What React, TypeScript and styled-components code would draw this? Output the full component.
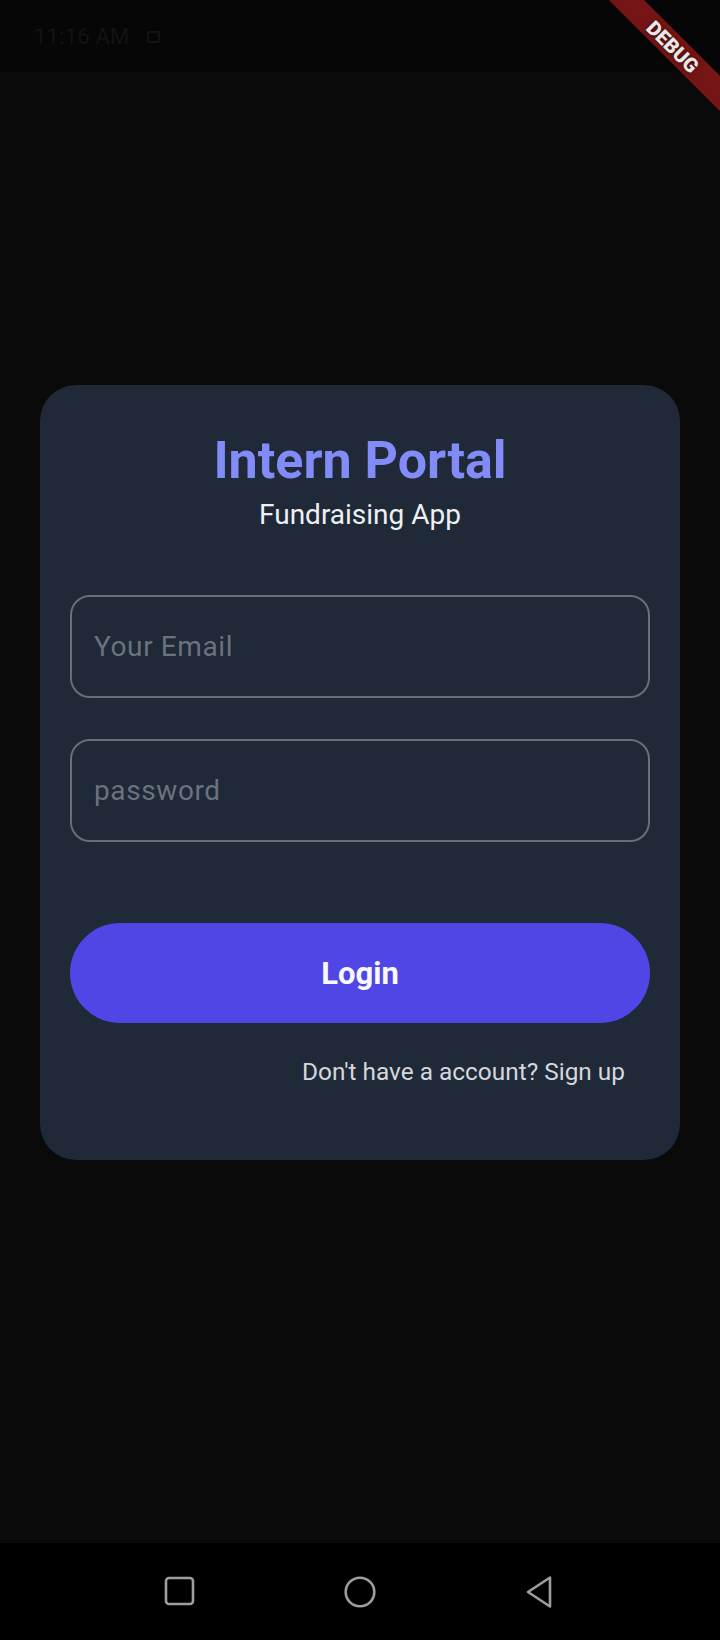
import React from "react";
import styled, { createGlobalStyle } from "styled-components";

const GlobalStyle = createGlobalStyle`
  html, body {
    margin: 0;
    padding: 0;
    background: #0a0a0a;
    overflow: hidden;
  }
  * { box-sizing: border-box; }
  body {
    font-family: Roboto, "Noto Sans", "Liberation Sans", sans-serif;
  }
`;

const Screen = styled.div`
  position: relative;
  width: 720px;
  height: 1640px;
  display: flex;
  flex-direction: column;
  background: #0a0a0a;
  overflow: hidden;
`;

const StatusBar = styled.div`
  height: 72px;
  flex: none;
  background: #060606;
  display: flex;
  align-items: center;
  padding-left: 34px;
  gap: 18px;
`;

const Clock = styled.span`
  font-size: 22px;
  font-weight: 400;
  color: #131313;
  letter-spacing: 0.2px;
  margin-top: 1px;
`;

const SimIcon = styled.span`
  width: 13px;
  height: 12px;
  border: 2px solid #131313;
  border-radius: 2px;
  margin-top: 2px;
`;

const Main = styled.main`
  flex: 1;
  display: flex;
  flex-direction: column;
  align-items: center;
`;

const Card = styled.section`
  margin-top: 313px;
  width: 640px;
  height: 775px;
  background: #1f2937;
  border-radius: 36px;
  padding: 45px 30px 0;
  display: flex;
  flex-direction: column;
  align-items: stretch;
`;

const Title = styled.h1`
  margin: 0;
  text-align: center;
  font-size: 52px;
  line-height: 62px;
  font-weight: 700;
  color: #818cf8;
`;

const Subtitle = styled.p`
  margin: 6px 0 0;
  text-align: center;
  font-size: 28px;
  line-height: 34px;
  font-weight: 400;
  color: #eef0f3;
`;

const Fields = styled.div`
  margin-top: 63px;
  display: flex;
  flex-direction: column;
  gap: 41px;
`;

const Field = styled.input`
  width: 100%;
  height: 103px;
  border: 2px solid #6a6e79;
  border-radius: 20px;
  background: transparent;
  padding: 0 22px;
  font-family: Roboto, "Noto Sans", sans-serif;
  font-size: 28px;
  letter-spacing: 0.6px;
  color: #e5e7eb;
  outline: none;
  &::placeholder {
    color: #6b7280;
  }
`;

const LoginButton = styled.button`
  margin-top: 81px;
  width: 100%;
  height: 100px;
  border: none;
  border-radius: 50px;
  background: #4f46e5;
  color: #f8f8ff;
  font-family: Roboto, "Noto Sans", sans-serif;
  font-size: 31px;
  font-weight: 700;
  cursor: pointer;
`;

const SignupRow = styled.div`
  margin-top: 35px;
  display: flex;
  justify-content: flex-end;
  padding-right: 25px;
`;

const SignupLink = styled.span`
  font-size: 24.4px;
  line-height: 28px;
  color: #d4d7dd;
`;

const NavBar = styled.nav`
  height: 97px;
  flex: none;
  background: #000;
  display: flex;
  align-items: center;
  justify-content: center;
`;

const NavSlot = styled.div`
  width: 180px;
  display: flex;
  justify-content: center;
  align-items: center;
`;

const Banner = styled.div`
  position: absolute;
  left: 573px;
  top: 34px;
  width: 200px;
  height: 25px;
  background: #761515;
  transform: rotate(45deg);
  display: flex;
  align-items: center;
  justify-content: center;
`;

const BannerText = styled.span`
  font-family: Roboto, "Noto Sans", sans-serif;
  font-size: 20px;
  line-height: 20px;
  font-weight: 900;
  color: #e8e8e8;
  text-shadow: 0 0 5px rgba(0, 0, 0, 0.5);
`;

export default function App() {
  return (
    <>
      <GlobalStyle />
      <Screen>
        <StatusBar>
          <Clock>11:16 AM</Clock>
          <SimIcon />
        </StatusBar>
        <Main>
          <Card>
            <Title>Intern Portal</Title>
            <Subtitle>Fundraising App</Subtitle>
            <Fields>
              <Field type="email" placeholder="Your Email" />
              <Field type="password" placeholder="password" />
            </Fields>
            <LoginButton>Login</LoginButton>
            <SignupRow>
              <SignupLink>Don't have a account? Sign up</SignupLink>
            </SignupRow>
          </Card>
        </Main>
        <NavBar>
          <NavSlot>
            <svg width="32" height="32" viewBox="0 0 32 32">
              <rect x="2" y="2" width="27" height="26" rx="3" fill="none" stroke="#9e9e9e" strokeWidth="2.6" />
            </svg>
          </NavSlot>
          <NavSlot>
            <svg width="34" height="34" viewBox="0 0 34 34">
              <circle cx="17" cy="17" r="14.3" fill="none" stroke="#9e9e9e" strokeWidth="2.6" />
            </svg>
          </NavSlot>
          <NavSlot>
            <svg width="32" height="34" viewBox="0 0 32 34">
              <path d="M26 2.5 L26 31.5 L4 17 Z" fill="none" stroke="#9e9e9e" strokeWidth="2.6" strokeLinejoin="round" />
            </svg>
          </NavSlot>
        </NavBar>
        <Banner>
          <BannerText>DEBUG</BannerText>
        </Banner>
      </Screen>
    </>
  );
}
